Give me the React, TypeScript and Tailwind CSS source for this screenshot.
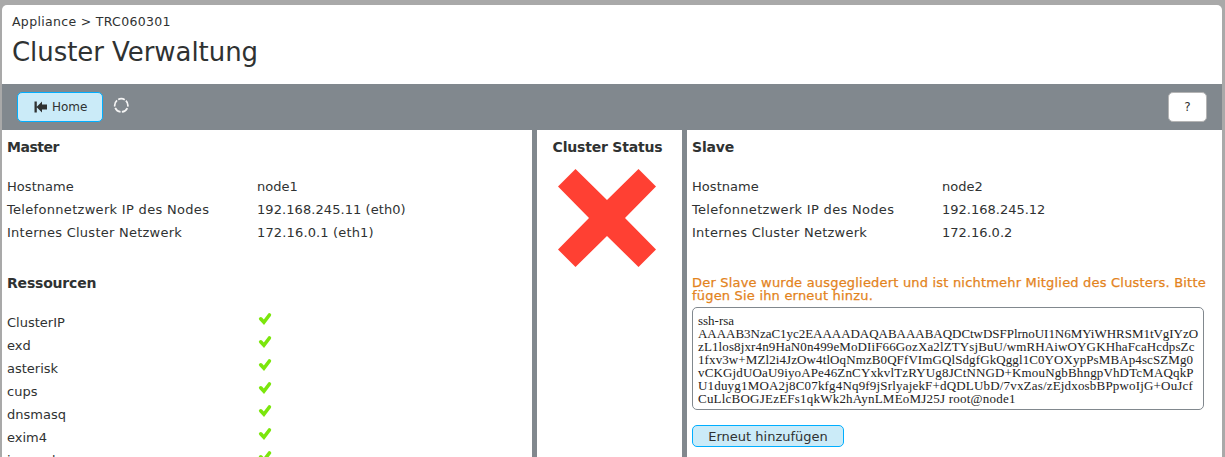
import type { ReactNode } from "react";

const resources = ["ClusterIP", "exd", "asterisk", "cups", "dnsmasq", "exim4", "incrond"];

const keyLines: [string, string][] = [
  ["ssh-rsa", "tracking-[0px]"],
  ["AAAAB3NzaC1yc2EAAAADAQABAAABAQDCtwDSFPlrnoUI1N6MYiWHRSM1tVgIYzO", "tracking-[-0.03px]"],
  ["zL1los8jxr4n9HaN0n499eMoDIiF66GozXa2lZTYsjBuU/wmRHAiwOYGKHhaFcaHcdpsZc", "tracking-[0.12px]"],
  ["1fxv3w+MZl2i4JzOw4tlOqNmzB0QFfVImGQlSdgfGkQggl1C0YOXypPsMBAp4scSZMg0", "tracking-[0.1px]"],
  ["vCKGjdUOaU9iyoAPe46ZnCYxkvlTzRYUg8JCtNNGD+KmouNgbBhngpVhDTcMAQqkP", "tracking-[0.15px]"],
  ["U1duyg1MOA2j8C07kfg4Nq9f9jSrlyajekF+dQDLUbD/7vxZas/zEjdxosbBPpwoIjG+OuJcf", "tracking-[0.18px]"],
  ["CuLlcBOGJEzEFs1qkWk2hAynLMEoMJ25J root@node1", "tracking-[0.22px]"],
];

function Check() {
  return (
    <svg className="mt-[2px] ml-[2px] block h-3 w-3 overflow-visible" viewBox="0 0 12 12">
      <path d="M1.700 5.800 4.900 9.300 10.400 2" fill="none" stroke="#7be60c" strokeWidth="3.6" strokeLinecap="round" />
    </svg>
  );
}

function Heading({ children }: { children: ReactNode }) {
  return <h2 className="h-[34px] whitespace-nowrap text-[14px] leading-[34px] font-bold tracking-[-0.2px]">{children}</h2>;
}

function Row({ label, children }: { label: ReactNode; children: ReactNode }) {
  return (
    <div className="flex h-[23px] leading-[23px]">
      <div className="w-[250px] shrink-0 whitespace-nowrap">{label}</div>
      <div className="whitespace-nowrap">{children}</div>
    </div>
  );
}

function NodeInfo({ host, phoneIp, clusterIp }: { host: string; phoneIp: string; clusterIp: string }) {
  return (
    <div className="mt-[11px]">
      <Row label={<span className="tracking-[0.05px]">Hostname</span>}>{host}</Row>
      <Row label={<span className="tracking-[0.31px]">Telefonnetzwerk IP des Nodes</span>}>
        <span className={phoneIp.includes("eth") ? "tracking-[0.07px]" : ""}>{phoneIp}</span>
      </Row>
      <Row label={<span className="tracking-[0.25px]">Internes Cluster Netzwerk</span>}>
        <span className={clusterIp.includes("eth") ? "tracking-[0.15px]" : ""}>{clusterIp}</span>
      </Row>
    </div>
  );
}

export default function App() {
  return (
    <div className="h-[457px] w-[1225px] overflow-hidden bg-[#a9a9a9] pt-[5px] pr-[3px] pl-[2px] font-['DejaVu_Sans',sans-serif] text-[13px] text-[#2f3232]">
      <div className="flex h-[452px] flex-col overflow-hidden rounded-t-[5px] bg-white">
        <header className="h-[79px] shrink-0 pt-[9px] pl-[10px]">
          <div className="h-4 text-[12.5px] leading-4 tracking-[0.32px]">Appliance &gt; TRC060301</div>
          <h1 className="mt-1 text-[26px] leading-[36px] whitespace-nowrap tracking-[-0.06px]">Cluster Verwaltung</h1>
        </header>
        <div className="flex h-[46px] shrink-0 items-start bg-[#81888e] pt-2 pr-[15px] pl-[15px]">
          <button className="flex h-[30px] w-[86px] items-center rounded-[5px] border border-[#00aeff] bg-[#cbebf8] pl-4 text-[12px]">
            <svg className="mr-[5px] h-3 w-[13px]" viewBox="0 0 13 12">
              <path d="M.5.5h2.300v11H.5zM2.500 6 8 .5v3h5v5H8v3z" fill="#2f3232" />
            </svg>
            Home
          </button>
          <svg className="mt-[5px] ml-[10px] h-4 w-4" viewBox="0 0 16 16">
            <circle cx="8.300" cy="8.300" r="6.6" fill="none" stroke="#f4f4f4" strokeWidth="1.7" strokeDasharray="6.89 1.4" strokeDashoffset="-2.8" />
          </svg>
          <button className="ml-auto h-[30px] w-[39px] rounded-[5px] border border-[#b4b4b4] bg-white text-[12px]">?</button>
        </div>
        <main className="flex min-h-0 flex-1 bg-[#81888e]">
          <section className="w-[530px] overflow-hidden bg-white pl-[5px]">
            <Heading><span className="tracking-[-0.5px]">Master</span></Heading>
            <NodeInfo host="node1" phoneIp="192.168.245.11 (eth0)" clusterIp="172.16.0.1 (eth1)" />
            <div className="mt-[22px]"><Heading>Ressourcen</Heading></div>
            <div className="mt-[11px]">
              {resources.map((name) => <Row key={name} label={name}><Check /></Row>)}
            </div>
          </section>
          <section className="ml-[5px] w-[145px] bg-white">
            <div className="pr-1 text-center"><Heading>Cluster Status</Heading></div>
            <svg className="mt-[5px] ml-[21px] h-[98px] w-[98px]" viewBox="0 0 98 98">
              <path d="M17.500 0L49 31L80.500 0L98 17.500L67 49L98 80.500L80.500 98L49 67L17.500 98L0 80.500L31 49L0 17.500z" fill="#ff4033" />
            </svg>
          </section>
          <section className="ml-[5px] w-[535px] bg-white pl-[5px]">
            <Heading>Slave</Heading>
            <NodeInfo host="node2" phoneIp="192.168.245.12" clusterIp="172.16.0.2" />
            <p className="mt-[32px] leading-[13px] tracking-[0.195px] whitespace-nowrap text-[#e3831c] [-webkit-text-stroke:0.25px_#e3831c]">
              Der Slave wurde ausgegliedert und ist nichtmehr Mitglied des Clusters. Bitte<br />fügen Sie ihn erneut hinzu.
            </p>
            <div className="mt-[5px] h-[103px] w-[512px] rounded-[5px] border border-[#81888e] pt-[6px] pl-[5px] font-['Liberation_Serif',serif] text-[13px] leading-[13px] text-[#222]">
              {keyLines.map(([text, tracking]) => (
                <div key={text} className={"whitespace-nowrap " + tracking}>{text}</div>
              ))}
            </div>
            <button className="mt-[15px] block h-[22px] w-[152px] rounded-[5px] border border-[#00aeff] bg-[#cbebf8] leading-[21px]">Erneut hinzufügen</button>
          </section>
        </main>
      </div>
    </div>
  );
}
